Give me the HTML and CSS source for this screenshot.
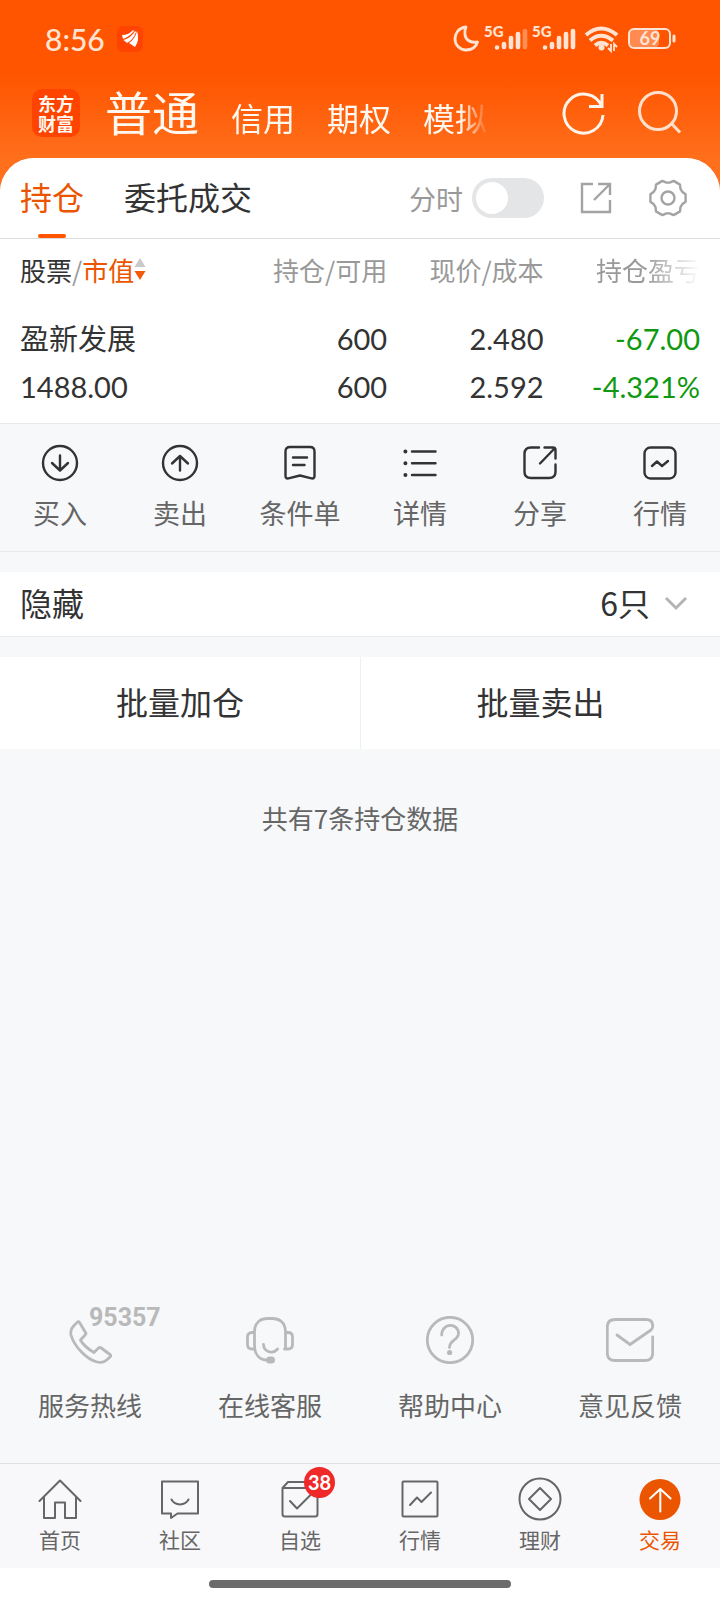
FILE: index.html
```html
<!DOCTYPE html>
<html lang="zh-CN">
<head>
<meta charset="utf-8">
<meta name="viewport" content="width=device-width, initial-scale=1">
<title>持仓</title>
<link rel="stylesheet" href="styles.css">
</head>
<body>
<div class="app">
  <div class="status">
    <span class="status-time">8:56</span>
    <svg class="status-app" width="26" height="26" viewBox="0 0 26 26"><rect width="26" height="26" rx="6" fill="#ff4300"/><path d="M5 9Q12 9 16 4L17 5Q12 11 6 13ZM6.500 14Q14 12 18 5L19 6Q16 14 10 17ZM12 17Q18 13 20 5Q23 14 18 21Z" fill="#fff"/></svg>
    <div class="status-icons">
      <svg width="30" height="32" viewBox="0 0 30 32" fill="none"><path d="M14 4C6 5 3 11 3 16C3 22 8 27 14 27C20 27 24 24 25.500 19C20 20 14 18 13 12C12.500 9 13 6 14 4Z" stroke="#ffe4d4" stroke-width="2.800" stroke-linejoin="round"/></svg>
      <svg width="46" height="32" viewBox="0 0 46 32"><text class="net" x="0" y="14">5G</text><g stroke="#ffe4d4" stroke-width="4.600" stroke-linecap="round"><path d="M13 24.500v0M20 21v3M27 15v9M34 11v13"/><path d="M41 8v16" opacity=".4"/></g></svg>
      <svg width="46" height="32" viewBox="0 0 46 32"><text class="net" x="0" y="14">5G</text><path d="M13 24.500v0M20 21v3M27 15v9M34 11v13M41 8v16" stroke="#ffe4d4" stroke-width="4.600" stroke-linecap="round"/></svg>
      <svg width="42" height="32" viewBox="0 0 42 32" fill="none" stroke="#ffe4d4" stroke-width="4"><path d="M6 12Q21-1 37 12M10 17.500Q21 8 33 17.500M15 22.500Q21 17 28 22.500"/><circle cx="21.500" cy="24.500" r="3" fill="#ffe4d4" stroke="none"/><path d="M31 21v7l-3-3M34 28v-7l3 3" stroke-width="1.800"/></svg>
      <svg width="52" height="32" viewBox="0 0 52 32"><rect x="5" y="6" width="30" height="19" rx="5" fill="#ff8a50"/><rect x="5" y="6" width="41" height="19" rx="5" fill="none" stroke="#ffe4d4" stroke-width="2"/><path d="M50 13v5" stroke="#ffe4d4" stroke-width="3" stroke-linecap="round"/><text class="battery" x="26" y="22" text-anchor="middle">69</text></svg>
    </div>
  </div>

  <header class="header">
    <div class="logo">东方<br>财富</div>
    <nav class="accounts">
      <button class="account account-on">普通</button>
      <button class="account">信用</button>
      <button class="account">期权</button>
      <button class="account">模拟</button>
    </nav>
    <div class="header-tools">
      <button aria-label="刷新"><svg width="46" height="46" viewBox="0 -3 46 46" fill="none" stroke="#fff4ec" stroke-width="3"><path d="M40.500 13A19.500 19.500 0 1 0 42 22M41 1V13.500H28"/></svg></button>
      <button aria-label="搜索"><svg width="46" height="46" viewBox="0 0 46 46" fill="none" stroke="#ffe0cc" stroke-width="3"><circle cx="22" cy="21" r="18.500"/><path d="M35 33L44 42.500"/></svg></button>
    </div>
  </header>

  <main class="main">
    <section class="panel">
      <div class="tabs">
        <button class="tab tab-on">持仓</button>
        <button class="tab">委托成交</button>
        <div class="tab-tools">
          <label class="switch">分时<input type="checkbox"></label>
          <button aria-label="分享"><svg width="36" height="36" viewBox="0 0 36 36" fill="none" stroke="#a2a3a5" stroke-width="2.400"><path d="M15 4H4V32H32V20M20 4H32V15M32 4L16 20"/></svg></button>
          <button aria-label="设置"><svg width="40" height="40" viewBox="0 0 40 40" fill="none" stroke="#a2a3a5" stroke-width="2.400" stroke-linejoin="round"><path d="M37.600 16.300V23.700L34.200 26.300 32.500 29.100 32 33.400 25.600 37.100 21.600 35.400H18.400L14.400 37.100 8 33.400 7.500 29.100 5.800 26.300 2.400 23.700V16.300L5.800 13.700 7.500 10.900 8 6.600 14.400 2.900 18.400 4.600H21.600L25.600 2.900 32 6.600 32.500 10.900 34.200 13.700Z"/><circle cx="20" cy="20" r="6.500"/></svg></button>
        </div>
      </div>
      <table class="holdings">
        <thead>
          <tr>
            <th><button class="sort"><span class="dark">股票</span>/<span class="orange">市值</span><svg width="12" height="24" viewBox="0 0 12 24"><path d="M6 1L11.500 10H.5Z" fill="#c9c9c9"/><path d="M6 23L.5 14H11.500Z" fill="#f4580c"/></svg></button></th>
            <th>持仓/可用</th>
            <th>现价/成本</th>
            <th class="fade">持仓盈亏</th>
          </tr>
        </thead>
        <tbody>
          <tr>
            <td><div>盈新发展</div><div>1488.00</div></td>
            <td><div>600</div><div>600</div></td>
            <td><div>2.480</div><div>2.592</div></td>
            <td class="down"><div>-67.00</div><div>-4.321%</div></td>
          </tr>
        </tbody>
      </table>
      <div class="actions">
        <button><svg viewBox="0 0 40 40"><circle cx="20" cy="20" r="17"/><path d="M20 12.500V27M12 20L20 27.500 28 20"/></svg>买入</button>
        <button><svg viewBox="0 0 40 40"><circle cx="20" cy="20" r="17"/><path d="M20 27.500V13M12 20.500L20 13 28 20.500"/></svg>卖出</button>
        <button><svg viewBox="0 0 40 40"><path d="M10 4H30Q34.500 4 34.500 8.500V33Q34.500 36 31.500 35.300L20 32.500 8.500 35.300Q5.500 36 5.500 33V8.500Q5.500 4 10 4ZM13 14.500H27M13 22H24.500"/></svg>条件单</button>
        <button><svg viewBox="0 0 40 40"><path d="M12 8.500H35.500M12 20.300H35.500M12 32H35.500"/><path class="dots" d="M5.400 8.500v0M5.400 20.300v0M5.400 32v0"/></svg>详情</button>
        <button><svg viewBox="0 0 40 40"><path d="M19 4.500H11Q4.500 4.500 4.500 11V29Q4.500 35 11 35H29Q35.500 35 35.500 29V21.500M24.500 4.500H33Q35.500 4.500 35.500 7V15.500M35 5L20 20.500"/></svg>分享</button>
        <button><svg viewBox="0 0 40 40"><rect x="4.500" y="4.500" width="31" height="31" rx="6"/><path d="M12 23L17 18.500 22 23 28 18"/></svg>行情</button>
      </div>
    </section>

    <button class="hidden-row"><span>隐藏</span><span class="hidden-count">6只</span><svg width="24" height="24" viewBox="0 0 24 24" fill="none" stroke="#b4b4b4" stroke-width="3"><path d="M2 8L12 18 22 8"/></svg></button>

    <div class="batch">
      <button>批量加仓</button>
      <button>批量卖出</button>
    </div>
    <p class="total">共有7条持仓数据</p>

    <div class="services">
      <button><span class="service-icon"><svg viewBox="0 0 48 48"><path d="M11.500 6C6 11 4 14 5 19C8 30 20 43 31 46C37 47.500 40 45 44 41Q45.500 39.500 44 38.500L34.500 31.500Q33.500 31 32.500 32L28 36.500C22 33 17 29 14.500 24L19.500 18.500Q20.500 17.500 19.500 16.500L13.500 6.500Q12.500 5 11.500 6Z"/></svg><span class="hotline">95357</span></span>服务热线</button>
      <button><span class="service-icon"><svg viewBox="0 0 48 48"><path d="M39.500 33V16C39.500 6 33 2.500 26 2.500H22C15 2.500 8.500 6 8.500 16V29C8.500 38 13 43.500 20 44M8.500 16.500H6Q1.500 16.500 1.500 21V28.500Q1.500 33 6 33H8.500M39.500 16.500H42Q46.500 16.500 46.500 21V28.500Q46.500 33 42 33H38.500M17.500 28.500C18 37 28 38 31.500 33"/><rect class="solid" x="20" y="40.500" width="9" height="7" rx="3.500"/></svg></span>在线客服</button>
      <button><span class="service-icon"><svg viewBox="0 0 48 48"><circle cx="24" cy="24" r="22.700"/><path d="M15.700 19C15.700 6.500 32.500 6.500 32.500 17.500C32.500 24 23.500 24 23.500 31.500"/><circle class="solid" cx="23.600" cy="36.500" r="2.600"/></svg></span>帮助中心</button>
      <button><span class="service-icon"><svg viewBox="0 0 48 48"><path d="M46.700 21V37Q46.700 44.500 39 44.500H9Q1.300 44.500 1.300 37V11Q1.300 3.500 9 3.500H40Q46.700 3.500 46.700 10Q46.700 12.500 45 14L24 28.500 11 19"/></svg></span>意见反馈</button>
    </div>
  </main>

  <nav class="bottom">
    <a href="#home"><svg viewBox="0 0 44 44"><path d="M1.500 24L22 3.500 42.500 24M6 20V41H17V25.500H27V41H38V20"/></svg>首页</a>
    <a href="#community"><svg viewBox="0 0 44 44"><path d="M4 4.500H40V36.500H19.500L13 41V36.500H4ZM13.500 22.500C17 29 27 29 30.500 22.500"/></svg>社区</a>
    <a href="#watchlist"><span class="badged"><svg viewBox="0 0 44 44"><path d="M4.500 11V37Q4.500 39.500 7 39.500H37Q39.500 39.500 39.500 37V11ZM4.500 11L10 5H34L39.500 11M12 24L19 31.500 32.500 18"/></svg><span class="badge">38</span></span>自选</a>
    <a href="#market"><svg viewBox="0 0 44 44"><rect x="4.500" y="4.500" width="35" height="35" rx="1"/><path d="M12 28L19 20.500 23.500 25 33 15.500"/></svg>行情</a>
    <a href="#wealth"><svg viewBox="0 0 44 44"><circle cx="22" cy="22" r="20.500"/><path d="M22 11L33 22 22 33 11 22Z"/></svg>理财</a>
    <a class="bottom-on" href="#trade"><svg viewBox="0 0 44 44"><circle cx="22" cy="22.500" r="20.500" fill="#eb5500" stroke="none"/><path d="M22.300 34.500V12M12 21.500L22.300 12 32.600 21.500" stroke="#fff"/></svg>交易</a>
  </nav>
  <div class="gesture"></div>
</div>
</body>
</html>
```
FILE: styles.css
```css
* { box-sizing: border-box; }
body {
  margin: 0;
  font-family: "Noto Sans CJK SC", sans-serif;
  font-size: 26px;
  color: #333;
  background: #fff;
}
button {
  margin: 0;
  padding: 0;
  border: 0;
  background: none;
  font: inherit;
  color: inherit;
  white-space: nowrap;
}
a { color: inherit; text-decoration: none; }
svg { display: block; flex: none; }

.app {
  min-height: 100vh;
  display: flex;
  flex-direction: column;
  background: linear-gradient(#ff5500 74px, #ff6f1c 160px) top / 100% 200px no-repeat;
}

/* status bar */
.status {
  display: flex;
  align-items: center;
  height: 78px;
  padding: 0 44px 0 45px;
}
.status-time { font: 500 30px/32px Lato, sans-serif; color: #ffe4d4; }
.status-app { margin-left: 12px; }
.status-icons { display: flex; gap: 2px; margin-left: auto; }
.net { font: 900 15px Lato, sans-serif; fill: #ffe4d4; }
.battery { font: 700 18px Lato, sans-serif; fill: #ffe4d4; }

/* account header */
.header {
  display: flex;
  align-items: center;
  height: 80px;
  padding: 0 38px 10px 32px;
  color: #fff8f0;
}
.logo {
  width: 48px;
  height: 48px;
  padding-top: 4px;
  border-radius: 10px;
  background: #ff4400;
  font-size: 18px;
  font-weight: 700;
  line-height: 20px;
  text-align: center;
}
.accounts {
  display: flex;
  align-items: baseline;
  gap: 32px;
  width: 384px;
  margin-left: 25px;
  padding-top: 2px;
  overflow-x: clip;
  mask-image: linear-gradient(90deg, #000 355px, transparent 384px);
}
.account { font-size: 32px; line-height: 72px; }
.account-on { font-size: 47px; }
.header-tools { display: flex; gap: 29px; margin-left: auto; }

/* holdings panel */
.main {
  flex: 1;
  display: flex;
  flex-direction: column;
  border-radius: 34px 34px 0 0;
  background: #f7f8fa;
  overflow: hidden;
}
.panel { background: #fff; }
.tabs {
  display: flex;
  align-items: stretch;
  gap: 40px;
  height: 81px;
  padding: 0 32px 0 20px;
  border-bottom: 1px solid #dcdcdc;
}
.tab { padding-bottom: 4px; font-size: 32px; }
.tab-on { position: relative; color: #eb5500; }
.tab-on::after {
  content: "";
  position: absolute;
  bottom: 0;
  left: 50%;
  width: 28px;
  height: 4px;
  margin-left: -14px;
  border-radius: 2px;
  background: #ff5500;
}
.tab-tools { display: flex; align-items: center; gap: 34px; margin-left: auto; }
.switch { display: flex; align-items: center; gap: 9px; font-size: 27px; color: #999; }
.switch input {
  appearance: none;
  width: 72px;
  height: 40px;
  margin: 0;
  padding: 4px;
  border-radius: 20px;
  background: #e4e5e7;
}
.switch input::before {
  content: "";
  display: block;
  width: 32px;
  height: 32px;
  border-radius: 50%;
  background: #fff;
}
.switch input:checked { background: #ff5500; }
.switch input:checked::before { margin-left: auto; }

.holdings {
  width: calc(100% - 40px);
  margin: 0 20px;
  border-spacing: 0;
  table-layout: fixed;
}
.holdings th {
  width: 23%;
  height: 64px;
  padding: 0 0 4px;
  font-weight: 400;
  color: #999;
  text-align: right;
  white-space: nowrap;
}
.holdings th:first-child { width: 31%; }
.holdings th:first-child, .holdings td:first-child { text-align: left; }
.holdings td {
  padding: 12px 0;
  font-family: Lato, "Noto Sans CJK SC", sans-serif;
  font-size: 29px;
  line-height: 48px;
  text-align: right;
  white-space: nowrap;
}
.holdings .down { color: #109810; }
.sort { display: flex; align-items: center; }
.dark { color: #333; }
.orange { color: #eb5500; }
.fade { mask-image: linear-gradient(90deg, #000 65%, transparent); }

.actions {
  display: grid;
  grid-template-columns: repeat(6, 1fr);
  height: 129px;
  border: solid #e9eaec;
  border-width: 1px 0;
  background: #f7f8fa;
  font-size: 27px;
  line-height: 40px;
  color: #666;
}
.actions button {
  display: flex;
  flex-direction: column;
  align-items: center;
  gap: 10px;
  padding-top: 19px;
}
.actions svg {
  width: 40px;
  height: 40px;
  fill: none;
  stroke: #333;
  stroke-width: 2.4px;
  stroke-linecap: round;
  stroke-linejoin: round;
}
.actions .dots { stroke-width: 4px; }

.hidden-row {
  display: flex;
  align-items: center;
  gap: 14px;
  height: 65px;
  margin: 20px 0;
  padding: 0 32px 4px 20px;
  border-bottom: 1px solid #e9eaec;
  background: #fff;
  font-size: 32px;
  line-height: 48px;
}
.hidden-count { margin-left: auto; }

.batch { display: grid; grid-template-columns: 1fr 1fr; height: 92px; background: #fff; font-size: 32px; }
.batch button { padding-bottom: 4px; }
.batch button + button { border-left: 1px solid #eff0f2; }
.total { margin: 49px 0; line-height: 40px; color: #666; text-align: center; }

/* customer service */
.services {
  display: grid;
  grid-template-columns: repeat(4, 1fr);
  margin-top: auto;
  padding-bottom: 38px;
  line-height: 40px;
  color: #666;
}
.services button { display: flex; flex-direction: column; align-items: center; gap: 21px; }
.service-icon { position: relative; }
.service-icon svg {
  width: 48px;
  height: 48px;
  fill: none;
  stroke: #b9b9b9;
  stroke-width: 2.8px;
  stroke-linecap: round;
  stroke-linejoin: round;
}
.service-icon .solid { fill: #b9b9b9; stroke: none; }
.hotline {
  position: absolute;
  left: 23px;
  top: -11px;
  font: 700 25px/26px Roboto, sans-serif;
  color: #b9b9b9;
}

/* bottom navigation */
.bottom {
  display: grid;
  grid-template-columns: repeat(6, 1fr);
  height: 105px;
  border-top: 1px solid #dedfe1;
  background: #f8f8fa;
  font-size: 21px;
  line-height: 32px;
  color: #666;
}
.bottom a { display: flex; flex-direction: column; align-items: center; gap: 2px; padding-top: 13px; }
.bottom svg {
  width: 44px;
  height: 44px;
  fill: none;
  stroke: #666;
  stroke-width: 2px;
  stroke-linecap: round;
  stroke-linejoin: round;
}
.bottom .bottom-on { color: #eb5500; }
.badged { position: relative; }
.badge {
  position: absolute;
  top: -10px;
  right: -13px;
  width: 31px;
  height: 31px;
  border-radius: 50%;
  background: #f02828;
  color: #fff;
  font: 700 20px/31px Lato, sans-serif;
  text-align: center;
}
.gesture { display: flex; justify-content: center; align-items: center; height: 32px; background: #fff; }
.gesture::before {
  content: "";
  width: 42%;
  height: 8px;
  border-radius: 4px;
  background: #6b6b6b;
}
```
